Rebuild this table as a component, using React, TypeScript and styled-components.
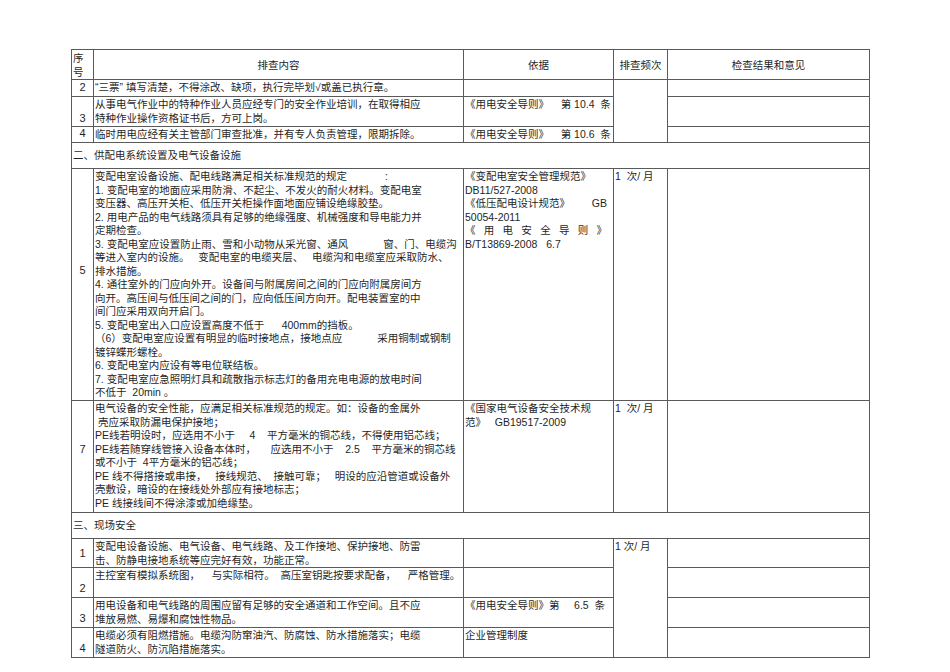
import type { ReactNode } from "react";
import styled, { createGlobalStyle } from "styled-components";

const GlobalStyle = createGlobalStyle`
  html, body {
    margin: 0;
    padding: 0;
    background: #fff;
  }
  body {
    font-family: "Liberation Sans", "Noto Sans CJK SC", sans-serif;
    color: #1f1f1f;
  }
`;

type ItemProps = {
  no: string;
  noTop: number;
  h: number;
  text: string[];
  basis?: ReactNode;
  freq?: { text: string; span: number };
};

function ItemRow({ no, noTop, h, text, basis, freq }: ItemProps) {
  return (
    <Row $h={h}>
      <NumCell $top={noTop}>{no}</NumCell>
      <TextCell>
        {text.map((t, i) => (
          <Line key={i}>{t}</Line>
        ))}
      </TextCell>
      <TextCell>{basis}</TextCell>
      {freq && <TextCell rowSpan={freq.span}>{freq.text}</TextCell>}
      <TextCell />
    </Row>
  );
}

function SectionRow({ title }: { title: string }) {
  return (
    <Row $h={26}>
      <SectionCell colSpan={5}>{title}</SectionCell>
    </Row>
  );
}

export default function App() {
  return (
    <>
      <GlobalStyle />
      <Page>
        <Sheet>
          <colgroup>
            <Col $w={22} />
            <Col $w={370} />
            <Col $w={150} />
            <Col $w={54} />
            <Col $w={202} />
          </colgroup>
          <tbody>
            <Row $h={30}>
              <HeadCell $align="left">
                <Line>序</Line>
                <Line>号</Line>
              </HeadCell>
              <HeadCell>排查内容</HeadCell>
              <HeadCell>依据</HeadCell>
              <HeadCell>排查频次</HeadCell>
              <HeadCell>检查结果和意见</HeadCell>
            </Row>

            <ItemRow
              no="2"
              noTop={1}
              h={17}
              text={["“三票” 填写清楚，不得涂改、缺项，执行完毕划√或盖已执行章。"]}
              freq={{ text: "", span: 3 }}
            />
            <ItemRow
              no="3"
              noTop={15}
              h={30}
              text={[
                "从事电气作业中的特种作业人员应经专门的安全作业培训，在取得相应",
                "特种作业操作资格证书后，方可上岗。",
              ]}
              basis={<Line>《用电安全导则》    第 10.4  条</Line>}
            />
            <ItemRow
              no="4"
              noTop={0}
              h={16}
              text={["临时用电应经有关主管部门审查批准，并有专人负责管理，限期拆除。"]}
              basis={<Line>《用电安全导则》    第 10.6  条</Line>}
            />

            <SectionRow title="二、供配电系统设置及电气设备设施" />

            <ItemRow
              no="5"
              noTop={95}
              h={232}
              text={[
                "变配电室设备设施、配电线路满足相关标准规范的规定             :",
                "1. 变配电室的地面应采用防滑、不起尘、不发火的耐火材料。变配电室",
                "变压器、高压开关柜、低压开关柜操作面地面应铺设绝缘胶垫。",
                "2. 用电产品的电气线路须具有足够的绝缘强度、机械强度和导电能力并",
                "定期检查。",
                "3. 变配电室应设置防止雨、雪和小动物从采光窗、通风            窗、门、电缆沟",
                "等进入室内的设施。   变配电室的电缆夹层、   电缆沟和电缆室应采取防水、",
                "排水措施。",
                "4. 通往室外的门应向外开。设备间与附属房间之间的门应向附属房间方",
                "向开。高压间与低压间之间的门，应向低压间方向开。配电装置室的中",
                "间门应采用双向开启门。",
                "5. 变配电室出入口应设置高度不低于      400mm的挡板。",
                "（6）变配电室应设置有明显的临时接地点，接地点应            采用铜制或钢制",
                "镀锌蝶形螺栓。",
                "6. 变配电室内应设有等电位联结板。",
                "7. 变配电室应急照明灯具和疏散指示标志灯的备用充电电源的放电时间",
                "不低于  20min 。",
              ]}
              basis={
                <>
                  <Line>《变配电室安全管理规范》</Line>
                  <Line>DB11/527-2008</Line>
                  <Line $spread>
                    <span>《低压配电设计规范》</span>
                    <span>GB</span>
                  </Line>
                  <Line>50054-2011</Line>
                  <Line $spread>
                    {"《用电安全导则》".split("").map((c, i) => (
                      <span key={i}>{c}</span>
                    ))}
                  </Line>
                  <Line>B/T13869-2008   6.7</Line>
                </>
              }
              freq={{ text: "1  次/ 月", span: 1 }}
            />
            <ItemRow
              no="7"
              noTop={42}
              h={112}
              text={[
                "电气设备的安全性能，应满足相关标准规范的规定。如：设备的金属外",
                " 壳应采取防漏电保护接地；",
                "PE线若明设时，应选用不小于     4    平方毫米的铜芯线，不得使用铝芯线；",
                "PE线若随穿线管接入设备本体时，     应选用不小于    2.5    平方毫米的铜芯线",
                "或不小于  4平方毫米的铝芯线；",
                "PE 线不得搭接或串接，   接线规范、  接触可靠；   明设的应沿管道或设备外",
                "壳敷设，暗设的在接线处外部应有接地标志；",
                "PE 线接线间不得涂漆或加绝缘垫。",
              ]}
              basis={
                <>
                  <Line>《国家电气设备安全技术规</Line>
                  <Line>范》   GB19517-2009</Line>
                </>
              }
              freq={{ text: "1  次/ 月", span: 1 }}
            />

            <SectionRow title="三、现场安全" />

            <ItemRow
              no="1"
              noTop={8}
              h={29}
              text={[
                "变配电设备设施、电气设备、电气线路、及工作接地、保护接地、防雷",
                "击、防静电接地系统等应完好有效，功能正常。",
              ]}
              freq={{ text: "1 次/ 月", span: 4 }}
            />
            <ItemRow
              no="2"
              noTop={14}
              h={30}
              text={["主控室有模拟系统图，    与实际相符。  高压室钥匙按要求配备，    严格管理。"]}
            />
            <ItemRow
              no="3"
              noTop={14}
              h={30}
              text={[
                "用电设备和电气线路的周围应留有足够的安全通道和工作空间。且不应",
                "堆放易燃、易爆和腐蚀性物品。",
              ]}
              basis={<Line>《用电安全导则》第     6.5  条</Line>}
            />
            <ItemRow
              no="4"
              noTop={14}
              h={30}
              text={[
                "电缆必须有阻燃措施。电缆沟防窜油汽、防腐蚀、防水措施落实；电缆",
                "隧道防火、防沉陷措施落实。",
              ]}
              basis={<Line>企业管理制度</Line>}
            />
          </tbody>
        </Sheet>
      </Page>
    </>
  );
}

const Page = styled.div`
  padding: 49px 0 0 71px;
`;

const Sheet = styled.table`
  width: 798px;
  border-collapse: collapse;
  table-layout: fixed;
  font-size: 10.5px;
  line-height: 13.5px;
`;

const Col = styled.col<{ $w: number }>`
  width: ${(p) => p.$w}px;
`;

const Row = styled.tr<{ $h: number }>`
  height: ${(p) => p.$h}px;
`;

const BaseCell = styled.td`
  border: 1px solid #5a5a5a;
  padding: 0 1px;
  overflow: hidden;
`;

const HeadCell = styled(BaseCell)<{ $align?: "left" | "center" }>`
  text-align: ${(p) => p.$align ?? "center"};
  vertical-align: middle;
  line-height: 14px;
`;

const NumCell = styled(BaseCell)<{ $top: number }>`
  padding-top: ${(p) => p.$top}px;
  text-align: center;
  vertical-align: top;
  font-size: 11px;
`;

const TextCell = styled(BaseCell)`
  vertical-align: top;
  padding-top: 1px;
  white-space: pre;
`;

const SectionCell = styled(BaseCell)`
  vertical-align: middle;
  white-space: pre;
`;

const Line = styled.div<{ $spread?: boolean }>`
  display: ${(p) => (p.$spread ? "flex" : "block")};
  justify-content: space-between;
  padding-right: ${(p) => (p.$spread ? "5px" : "0")};
`;
